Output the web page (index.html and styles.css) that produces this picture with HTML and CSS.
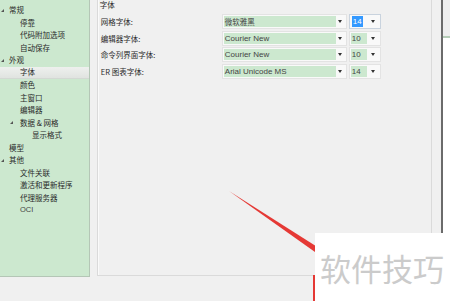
FILE: index.html
```html
<!DOCTYPE html>
<html lang="zh-CN">

<head>
    <meta charset="UTF-8">
    <title>字体选项</title>
    <link rel="stylesheet" href="styles.css">
</head>

<body>
    <div class="window">
        <!-- Options tree -->
        <div class="tree">
            <div class="node l1"><span class="tw"></span>常规</div>
            <div class="node l2">停靠</div>
            <div class="node l2">代码附加选项</div>
            <div class="node l2">自动保存</div>
            <div class="node l1"><span class="tw"></span>外观</div>
            <div class="node l2 selected">字体</div>
            <div class="node l2">颜色</div>
            <div class="node l2">主窗口</div>
            <div class="node l2">编辑器</div>
            <div class="node l2b"><span class="tw"></span>数据 &amp; 网格</div>
            <div class="node l3">显示格式</div>
            <div class="node l1"><span class="tw empty"></span>模型</div>
            <div class="node l1"><span class="tw"></span>其他</div>
            <div class="node l2">文件关联</div>
            <div class="node l2">激活和更新程序</div>
            <div class="node l2">代理服务器</div>
            <div class="node l2 latin">OCI</div>
        </div>

        <!-- Font settings -->
        <div class="panel">
            <div class="group-title">字体</div>
            <div class="rows">
                <div class="row">
                    <div class="label">网格字体:</div>
                    <div class="combo font"><span class="val cjk">微软雅黑</span><span class="arr"></span></div>
                    <div class="combo size focus"><span class="val"><span class="hl">14</span></span><span class="arr"></span></div>
                </div>
                <div class="row">
                    <div class="label">编辑器字体:</div>
                    <div class="combo font"><span class="val">Courier New</span><span class="arr"></span></div>
                    <div class="combo size"><span class="val">10</span><span class="arr"></span></div>
                </div>
                <div class="row">
                    <div class="label">命令列界面字体:</div>
                    <div class="combo font"><span class="val">Courier New</span><span class="arr"></span></div>
                    <div class="combo size"><span class="val">10</span><span class="arr"></span></div>
                </div>
                <div class="row">
                    <div class="label">ER 图表字体:</div>
                    <div class="combo font"><span class="val">Arial Unicode MS</span><span class="arr"></span></div>
                    <div class="combo size"><span class="val">14</span><span class="arr"></span></div>
                </div>
            </div>
        </div>

        <div class="edge"><div class="edge-line"></div></div>
    </div>

    <!-- annotation over the screenshot -->
    <svg class="marks" width="450" height="301" viewBox="0 0 450 301">
        <polygon points="229,191 315,245.5 315,252" fill="#e53935" />
        <rect x="313" y="275" width="2" height="26" fill="#e53935" />
    </svg>
    <div class="watermark">软件技巧</div>
</body>

</html>
```

FILE: styles.css
```css
* {
    box-sizing: border-box;
    margin: 0;
    padding: 0;
}

body {
    width: 450px;
    height: 301px;
    overflow: hidden;
    position: relative;
    background: #f0f0f0;
    font-family: "Noto Sans CJK SC", sans-serif;
    color: #2a2a2a;
}

.window {
    display: flex;
    align-items: flex-start;
}

/* Tree */
.tree {
    width: 90px;
    height: 277px;
    background: #cce8cf;
    border-right: 1px solid #b4c6b6;
    border-bottom: 1px solid #b4c6b6;
    padding-top: 4px;
    font-size: 7.5px;
}

.node {
    height: 12.5px;
    line-height: 12.5px;
    white-space: nowrap;
    display: flex;
    align-items: center;
}

.l1 {
    padding-left: 1px;
}

.l2 {
    padding-left: 20px;
}

.l2b {
    padding-left: 10px;
}

.l3 {
    padding-left: 32px;
}

.latin {
    font-family: "Liberation Sans", sans-serif;
    font-size: 7.5px;
    color: #444;
}

.tw {
    width: 0;
    height: 0;
    border-left: 3px solid transparent;
    border-bottom: 3px solid #555;
    margin-right: 5px;
}

.l2b .tw {
    margin-right: 7px;
}

.tw.empty {
    border-bottom-color: transparent;
}

.selected {
    background: linear-gradient(#eef0ee, #e0e3e0);
    border-bottom: 1px solid #d3d8d3;
}

/* Panel */
.panel {
    width: 336px;
    height: 276px;
    margin-left: 7px;
    border: 1px solid #dadada;
    border-top: none;
    box-shadow: inset 1px 0 0 #fafafa;
    font-size: 7.5px;
}

.group-title {
    height: 10px;
    line-height: 10px;
    padding-left: 2px;
}

.rows {
    margin-top: 4px;
    display: flex;
    flex-direction: column;
    gap: 1.5px;
}

.row {
    display: flex;
    align-items: center;
    height: 15px;
}

.label {
    width: 124px;
    padding-left: 3px;
    white-space: nowrap;
}

.combo {
    height: 15px;
    display: flex;
    align-items: stretch;
    border: 1px solid #e3e3e3;
    background: #f9f9f9;
    padding: 1px;
    font-family: "Liberation Sans", sans-serif;
    font-size: 8px;
    color: #444;
}

.combo.font {
    width: 125px;
}

.combo.size {
    width: 32px;
    margin-left: 2px;
}

.combo.focus {
    border-color: #c9d3de;
}

.val {
    background: #cce8cf;
    display: flex;
    align-items: center;
    padding-left: 1px;
    white-space: nowrap;
    overflow: hidden;
}

.font .val {
    width: 112px;
}

.size .val {
    width: 16px;
}

.val.cjk {
    font-family: "Noto Sans CJK SC", sans-serif;
    font-size: 7.5px;
}

.focus .val {
    background: none;
    padding-left: 1px;
}

.hl {
    background: #3399ff;
    color: #fff;
    height: 100%;
    display: flex;
    align-items: center;
    padding: 0 1px;
}

.arr {
    flex: 1;
    display: flex;
    align-items: center;
    justify-content: center;
}

.arr::before {
    content: "";
    border-left: 2px solid transparent;
    border-right: 2px solid transparent;
    border-top: 3px solid #333;
}

/* Window behind, on the right */
.edge {
    width: 9px;
    height: 233px;
    margin-left: 9px;
    border-left: 2px solid #6b6b6b;
    background: #fff;
}

.edge-line {
    height: 38px;
    background: #eeeeee;
    border-bottom: 2px solid #b6cdb8;
}

/* Annotation */
.marks {
    position: absolute;
    left: 0;
    top: 0;
}

.watermark {
    position: absolute;
    left: 315px;
    top: 233px;
    width: 135px;
    height: 68px;
    background: #fff;
    display: flex;
    align-items: center;
    padding-left: 5px;
    font-size: 31px;
    color: #cbcbcb;
    white-space: nowrap;
}
```
